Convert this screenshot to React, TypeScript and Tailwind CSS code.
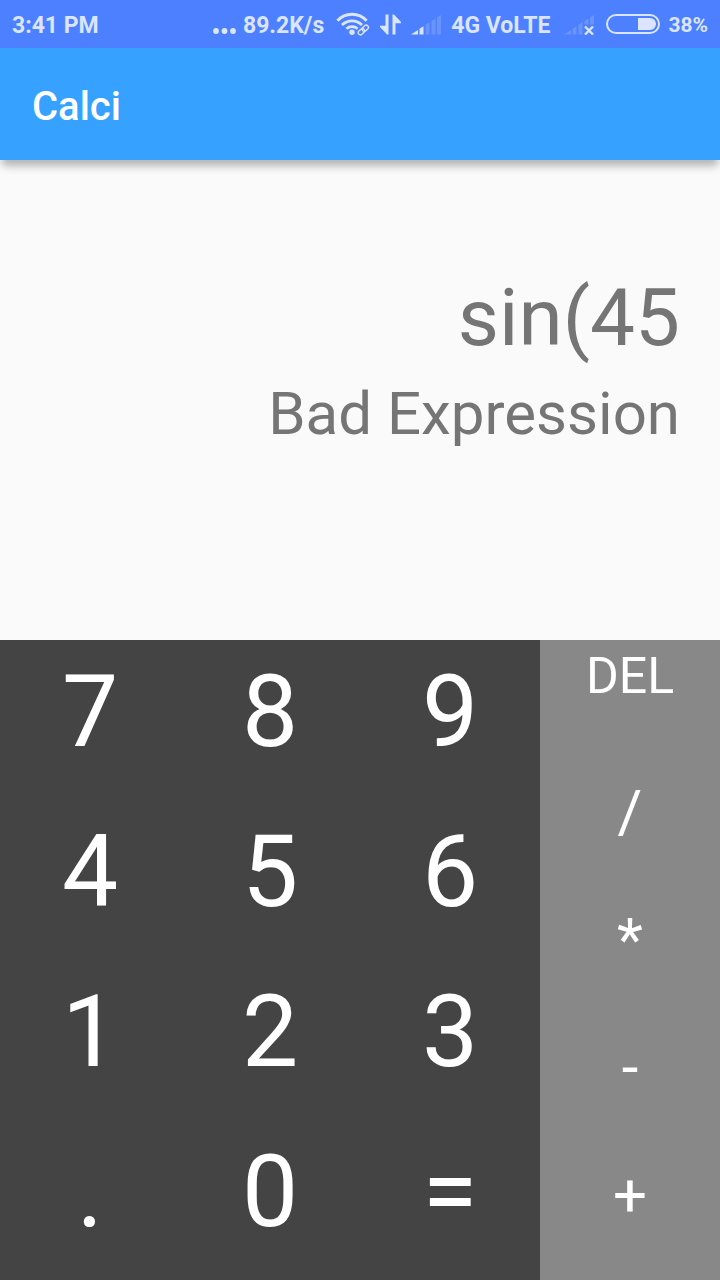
const digits = ['7', '8', '9', '4', '5', '6', '1', '2', '3', '.', '0', '=']
const operators = ['/', '*', '-', '+']

function MoreDots() {
  return (
    <svg width="24" height="20" viewBox="0 0 24 20" fill="currentColor" aria-hidden="true">
      <circle cx="3" cy="17" r="2.9" />
      <circle cx="11.5" cy="17" r="2.9" />
      <circle cx="20" cy="17" r="2.9" />
    </svg>
  )
}

function WifiLink() {
  return (
    <svg width="34" height="24" viewBox="0 0 34 24" fill="none" stroke="currentColor" aria-hidden="true">
      <g strokeWidth="2.8">
        <path d="M1.4 8.8A19.5 19.5 0 0 1 30.6 8.8" />
        <path d="M6 13A14 14 0 0 1 26 13" />
        <path d="M10.4 16.7A8.4 8.4 0 0 1 21.6 16.7" />
      </g>
      <circle cx="16" cy="20.2" r="2.7" fill="currentColor" stroke="none" />
      <path d="M24 21.5 31 15.5" stroke="#4d80ff" strokeWidth="5.5" strokeLinecap="round" />
      <g transform="rotate(-42 27.3 18)" strokeWidth="1.4">
        <rect x="21.2" y="15.8" width="7" height="4.4" rx="2.2" />
        <rect x="26.4" y="15.8" width="7" height="4.4" rx="2.2" />
      </g>
    </svg>
  )
}

function DataArrows() {
  return (
    <svg width="21" height="22" viewBox="0 0 21 22" fill="currentColor" aria-hidden="true">
      <path d="M5.5 1.5h3v20H7L0 14v-1.2h5.5z" />
      <path d="M12.5 1.5H14L21 9v1.2h-5.5v11.3h-3z" />
    </svg>
  )
}

function Signal({ level, missing }: { level: number; missing?: boolean }) {
  const bars = [
    'M0 20.5 7 16v4.5z',
    'M8.5 14.8 12.5 12.2v8.3h-4z',
    'M14.5 10.8 18.5 8.3v12.2h-4z',
    'M20.5 7 24.5 4.4v16.1h-4z',
    'M26 3.4 30 1v19.5h-4z',
  ]
  return (
    <svg width="30" height="21" viewBox="0 0 30 21" fill="currentColor" aria-hidden="true">
      {bars.map((d, i) => (
        <path key={d} d={d} fillOpacity={i < level ? 1 : 0.2} />
      ))}
      {missing && (
        <>
          <path d="M19.5 10.5H30V21H19.5z" fill="#4d80ff" />
          <path d="m21 12.5 8 8m0-8-8 8" stroke="currentColor" strokeWidth="2.4" />
        </>
      )}
    </svg>
  )
}

function Battery() {
  return (
    <svg width="54" height="20" viewBox="0 0 54 20" aria-hidden="true">
      <rect x="1" y="1" width="52" height="18" rx="9" fill="none" stroke="currentColor" strokeWidth="2" />
      <path d="M32 4h12a6 6 0 0 1 0 12H32z" fill="currentColor" />
    </svg>
  )
}

function StatusBar() {
  return (
    <div className="flex h-12 items-center bg-[#4d80ff] px-3 text-[23px] font-bold text-[#dbe5ff]">
      <span className="mr-auto pt-1">3:41 PM</span>
      <div className="flex items-center">
        <MoreDots />
        <span className="ml-1.5 pt-1">89.2K/s</span>
        <span className="ml-3"><WifiLink /></span>
        <span className="ml-2.5"><DataArrows /></span>
        <span className="ml-2.5"><Signal level={2} /></span>
        <span className="ml-2.5 pt-1">4G VoLTE</span>
        <span className="ml-3.5"><Signal level={0} missing /></span>
        <span className="ml-3"><Battery /></span>
        <span className="ml-2 pt-1 text-[21px]">38%</span>
      </div>
    </div>
  )
}

export default function App() {
  return (
    <div className="grid min-h-screen grid-rows-2 bg-[#fafafa] font-[Roboto,sans-serif]">
      <div className="flex flex-col">
        <StatusBar />
        <header className="flex h-28 items-center bg-[#36a1ff] px-8 pt-1.5 shadow-[0_8px_8px_-2px_rgba(0,0,0,0.28)]">
          <h1 className="text-[40px] font-medium text-white">Calci</h1>
        </header>
        <main className="flex flex-1 flex-col items-end gap-3 px-10 pt-[110px] text-[#757575]">
          <output className="text-[80px] leading-[96px]">sin(45</output>
          <output className="text-[60px] leading-[72px]">Bad Expression</output>
        </main>
      </div>
      <div className="grid grid-cols-4 text-white">
        <div className="col-span-3 grid grid-cols-3 grid-rows-4 bg-[#444444]">
          {digits.map((key) => (
            <button key={key} type="button" className="flex items-start justify-center text-[100px] leading-[144px]">
              {key}
            </button>
          ))}
        </div>
        <div className="grid grid-rows-5 bg-[#888888]">
          <button type="button" className="flex items-start justify-center text-[50px] leading-[72px]">
            DEL
          </button>
          {operators.map((key) => (
            <button key={key} type="button" className="flex items-start justify-center text-[60px] leading-[88px]">
              {key}
            </button>
          ))}
        </div>
      </div>
    </div>
  )
}
